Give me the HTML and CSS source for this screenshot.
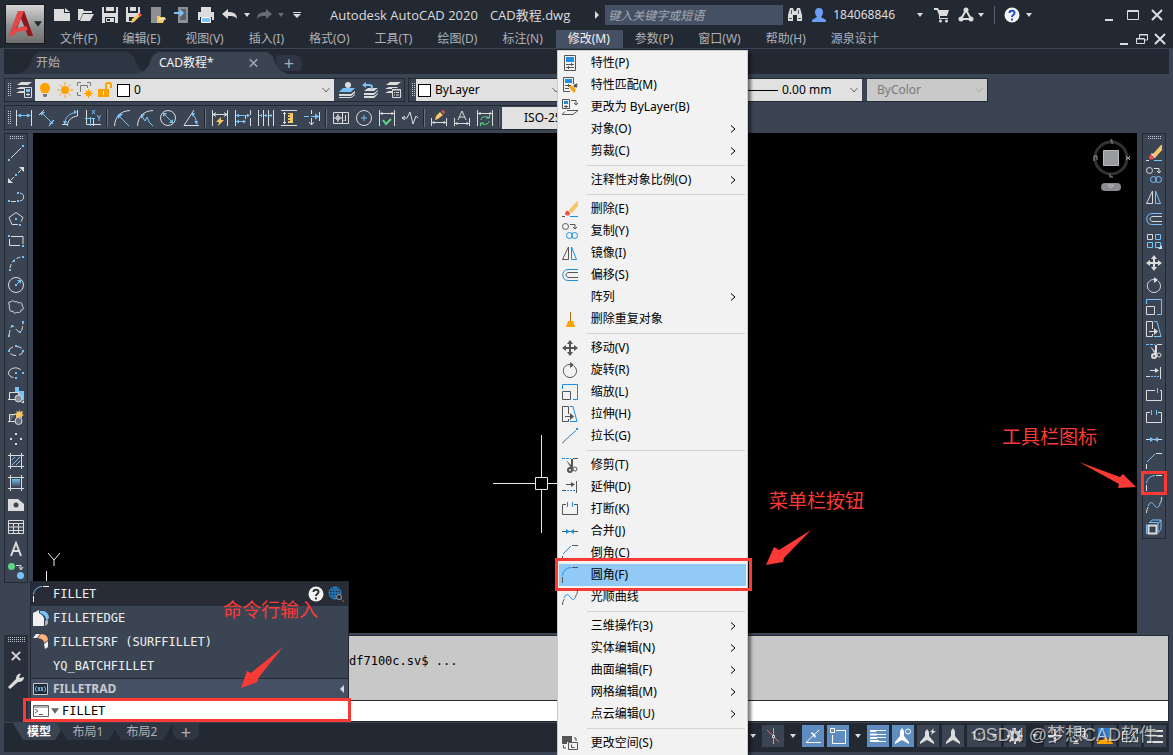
FILE: index.html
```html
<!DOCTYPE html>
<html lang="zh-CN">
<head>
  <meta charset="UTF-8" />
  <meta name="viewport" content="width=device-width, initial-scale=1.0"/>
  <title>Autodesk AutoCAD 2020 - CAD教程.dwg</title>
  <link rel="stylesheet" href="styles.css">
</head>
<body>

  <!-- Icon set -->
  <svg class="sprite" aria-hidden="true">
    <defs>
      <linearGradient id="grad" x1="0" y1="0" x2="0" y2="1"><stop offset="0" stop-color="#6fbdf5"/><stop offset="1" stop-color="#3b4453"/></linearGradient>
    </defs>
    <symbol id="caret" viewBox="0 0 6 6"><path class="f" d="M0 1h6L3 5z"/></symbol>
    <symbol id="chev" viewBox="0 0 8 8"><path d="M0.500 2l3.500 4 3.500-4"/></symbol>
    <symbol id="sub" viewBox="0 0 8 8"><path d="M2 0.500l4 3.500-4 3.500"/></symbol>
    <symbol id="x" viewBox="0 0 12 12"><path d="M1 1l10 10M11 1L1 11"/></symbol>

    <!-- quick access -->
    <symbol id="new" viewBox="0 0 16 16"><path class="f" d="M0 2h10v4h6v8H0z"/><path class="f" d="M11 1l5 4h-5z"/></symbol>
    <symbol id="open" viewBox="0 0 16 16"><path class="f" d="M0 2h5l1 2h8v2H5l-3 7H0z"/><path class="f" d="M5 7h11l-4 7H2z"/></symbol>
    <symbol id="save" viewBox="0 0 16 16"><path class="f" d="M0 0h2v6h12V0h2v16H0z"/><path class="f" d="M4 0h8v4H4z"/><path class="dk" d="M3 10h10v6H3z"/><path class="f" d="M4 11h8v4H4z"/><path class="dk" d="M5 12h3v2H5z"/></symbol>
    <symbol id="saveas" viewBox="0 0 16 16"><path class="f" d="M0 0h2v6h10V0h2v7l-7 8H0z"/><path class="f" d="M4 0h6v4H4z"/><path class="dk" d="M3 10h6v4H3z"/><path class="y" d="M6 12l6-5 2 2-6 6-3 1z"/><path class="r" d="M12 7l2-1 2 2-2 2z"/></symbol>
    <symbol id="webopen" viewBox="0 0 16 16"><path class="f g" d="M1 0h10v9H7v7H1z"/><path class="y" d="M7 9h3l1 1h4v1l-2 5H7z"/><path stroke="#fff" d="M9 12h7"/></symbol>
    <symbol id="websave" viewBox="0 0 16 16"><path class="f g" d="M4 0h10v16H4z"/><path fill="#5c6068" stroke="none" d="M6 2h6v11H6z"/><path class="af" d="M0 5h6V2l4 4-4 4V7H0z"/></symbol>
    <symbol id="print" viewBox="0 0 16 16"><path class="f" d="M3 0h10v5H3z"/><path class="f" d="M0 5h16v8h-2v-3H2v3H0z"/><path class="af" d="M4 11h8v4H4z"/><path d="M3.500 10.500h9v5h-9z" stroke="#fff"/></symbol>
    <symbol id="undo" viewBox="0 0 16 16"><path class="f" d="M0 7l6-5v3c5 0 9 1 9 7-2-3-4-3-9-3v3z"/></symbol>
    <symbol id="redo" viewBox="0 0 16 16"><path class="f" d="M16 7l-6-5v3C5 5 1 6 1 12c2-3 4-3 9-3v3z"/></symbol>
    <symbol id="custom" viewBox="0 0 8 8"><path class="f" d="M0 1h8v1H0zM0 3h8L4 7z"/></symbol>
    <symbol id="binoc" viewBox="0 0 16 16"><path class="f" d="M3 1h3l1 3h2l1-3h3l2 7v6h-5V8H6v6H1V8z"/><path stroke="#555b66" d="M4.500 3v4M11.500 3v4M2 11.500h3M11 11.500h3"/></symbol>
    <symbol id="user" viewBox="0 0 16 16"><path fill="#6b9ef5" stroke="none" d="M8 1c3 0 4 2 4 4s-1 4-2 5l5 3v2H1v-2l5-3C5 9 4 7 4 5s1-4 4-4z"/></symbol>
    <symbol id="cart" viewBox="0 0 16 16"><path class="f" d="M0 1h4l1 2h10l-2 6H6v2h8v1H5V8L3 3H0z"/><circle class="f" cx="6.500" cy="14" r="1.500"/><circle class="f" cx="12.500" cy="14" r="1.500"/></symbol>
    <symbol id="a360" viewBox="0 0 16 16"><path stroke-width="2" d="M8 3l-5 9h10z"/><circle class="f" cx="8" cy="3" r="2.500"/><circle class="f" cx="3" cy="12" r="2.500"/><circle class="f" cx="13" cy="12" r="2.500"/></symbol>
    <symbol id="help" viewBox="0 0 16 16"><circle cx="8" cy="8" r="7.500" fill="#f3f3f3" stroke="none"/><path class="q" stroke-width="2" d="M5.500 6c0-3 5-3 5 0 0 2-2.500 2-2.500 4M8 11.500v2"/></symbol>
    <symbol id="min" viewBox="0 0 12 12"><path stroke-width="2" d="M2 11h8"/></symbol>
    <symbol id="max" viewBox="0 0 12 12"><path d="M0.500 1.500h11v9h-11zM0 2.500h12"/></symbol>
    <symbol id="restore" viewBox="0 0 12 12"><path d="M0.500 5.500h8v5h-8zM0 6h8M3.500 5V1.500h8V7H9M3 2h9"/></symbol>

    <!-- layers -->
    <symbol id="layers" viewBox="0 0 16 16"><path class="f" d="M5 0h11l-4 3H1zM4 5h9l-2 2H0zM4 9h4v2H0z"/><path class="dk2" d="M8 6h8v10H8z"/><path d="M8.500 5.500h7v10h-7z"/><path class="af" d="M10 7h4v3h-4z"/><path d="M10 12.500h4M12 11v3"/></symbol>
    <symbol id="bulb" viewBox="0 0 16 16"><path class="o" d="M8 1c3 0 5 2 5 5 0 2-1 3-2 5H5C4 9 3 8 3 6c0-3 2-5 5-5z"/><path fill="#777" stroke="none" d="M6 12h4v2l-1 1H7l-1-1z"/></symbol>
    <symbol id="sun" viewBox="0 0 16 16"><circle class="o" cx="8" cy="8" r="4"/><path stroke="#ffa200" d="M8 0v3M8 13v3M0 8h3M13 8h3M2.500 2.500l2 2M11.500 11.500l2 2M2.500 13.500l2-2M11.500 4.500l2-2"/></symbol>
    <symbol id="vpsun" viewBox="0 0 16 16"><path stroke="#777" d="M0.500 4V0.500H4M10 0.500h3.500V4M0.500 10v3.500H4M3.500 10V3.500h7V6"/><circle class="o" cx="11.500" cy="11.500" r="2.500"/><path stroke="#ffa200" d="M11.500 7v9M7 11.500h9M8.500 8.500l6 6M8.500 14.500l6-6"/></symbol>
    <symbol id="lock" viewBox="0 0 16 16"><path class="o" d="M1 7h11v8H1z"/><path stroke="#ffa200" stroke-width="2" d="M9 7V3c0-3 5-3 5 0v3"/><path stroke="#fff" d="M6.500 9v4"/></symbol>
    <symbol id="laycur" viewBox="0 0 16 16"><path class="af" d="M4 6h12l-4 4H0z"/><path class="f" d="M0 12h12l4-3v2l-4 3H0z"/><path d="M0 15.500h12l4-3"/><circle class="f" cx="9" cy="3" r="3"/></symbol>
    <symbol id="layprev" viewBox="0 0 16 16"><path class="f" d="M6 6h10l-4 3H2zM2 11h10l4-3v1l-4 4H2zM2 14h10l4-3v1l-4 4H2z"/><path class="a" stroke-width="2" d="M2 3h5c3 0 3 1 3 4"/><path class="af" d="M0 3l4-3v6z"/></symbol>
    <symbol id="layst" viewBox="0 0 16 16"><path class="f" d="M5 0h11l-4 3H1zM4 5h9l-2 2H0zM4 9h4v2H0z"/><path class="dk2" d="M7 6h9v10H7z"/><path d="M7.500 7.500h8v8h-8zM7 8h9M9 10.500h1M11 10.500h3M9 13h1M11 13h3"/></symbol>

    <!-- dimension -->
    <symbol id="d-lin" viewBox="0 0 16 16"><path d="M0.500 0v16M15.500 0v16"/><path class="a" d="M2 5.500h12"/><path class="af" d="M1 5.500l4-2v4zM15 5.500l-4-2v4z"/></symbol>
    <symbol id="d-ali" viewBox="0 0 16 16"><path d="M0 5l5-5M10 16l5-6"/><path class="a" d="M3 3l10 10"/><path class="af" d="M2 2h4L2 6zM14 14h-4l4-4z"/></symbol>
    <symbol id="d-arc" viewBox="0 0 16 16"><path d="M5.500 16c0-6 4-9 10-10M0 14.500h5M15.500 0v6"/><path class="a" d="M2.500 14C3 7 8 3 14 2.500"/><path class="af" d="M1 11h4l-2 4zM12 0v4l3-2z"/></symbol>
    <symbol id="d-ord" viewBox="0 0 16 16"><path d="M1.500 0v14.500H16M8.500 8v8"/><path class="a" d="M0 8.500h10M7 0l3 4M10 0L7 4M12 5l2 3 2-3M14 8v3M5.500 7v9"/></symbol>
    <symbol id="d-rad" viewBox="0 0 16 16"><path d="M0.500 16C1 7 6 1 16 0.500"/><path class="a" d="M5 6l10 10"/><path class="af" d="M4 4h5L4 9z"/></symbol>
    <symbol id="d-jog" viewBox="0 0 16 16"><path d="M0.500 16C1 7 6 1 16 0.500"/><path class="a" d="M5 6l3 5 2-4 2 5 4 4"/><path class="af" d="M4 4h4L4 9z"/></symbol>
    <symbol id="d-dia" viewBox="0 0 16 16"><circle cx="8" cy="8" r="7.500"/><path class="a" d="M3 3l10 10"/><path class="af" d="M3 3h4L3 7zM13 13H9l4-4z"/></symbol>
    <symbol id="d-ang" viewBox="0 0 16 16"><path d="M11 0L1 15.500h15"/><path class="a" d="M9 4c3 2 4 5 4.500 9"/><path class="af" d="M8 3h4l-2 4zM11 11h4l-1 4z"/></symbol>
    <symbol id="d-quick" viewBox="0 0 16 16"><path d="M0.500 0v16M15.500 0v16M1 4.500h14M1 4.500l3-2M1 4.500l3 2M15 4.500l-3-2M15 4.500l-3 2"/><path class="y" d="M9 7l-5 5h3l-1 4 6-6H9z"/></symbol>
    <symbol id="d-base" viewBox="0 0 16 16"><path d="M0.500 0v16M10.500 6v3M15.500 0v5M15.500 8v8"/><path class="a" d="M1 5.500h13M1 11.500h9"/><path class="af" d="M15 5.500l-3-2v4zM11 11.500l-3-2v4zM1 5.500l3-2v4zM1 11.500l3-2v4z"/></symbol>
    <symbol id="d-cont" viewBox="0 0 16 16"><path d="M0.500 0v16M5.500 0v16M10.500 0v16M15.500 0v16"/><path class="a" stroke-dasharray="3 2" d="M1 5.500h14M3.500 4v3M8 4v3M13 4v3"/></symbol>
    <symbol id="d-space" viewBox="0 0 16 16"><path d="M0 0.500h16M0 15.500h16M3.500 2v12M2 3.500h3M2 12.500h3"/><path class="y" d="M7 3h5v10H7v-2h2v-1H7V8h2V7H7V5h2V4H7z"/></symbol>
    <symbol id="d-break" viewBox="0 0 16 16"><path d="M7.500 0v4M7.500 8v7M5 12l2.500 3 2.500-3M15.500 2v9"/><path class="a" d="M0 6.500h5M7 6.500h8"/><path class="af" d="M15 6.500l-4-3v6z"/></symbol>
    <symbol id="d-tol" viewBox="0 0 16 16"><path d="M0.500 2.500h15v11h-15zM9.500 2v12M5 4v8M1 8h8M12.500 5v6M10.500 10.500h1"/><circle cx="5" cy="8" r="2"/></symbol>
    <symbol id="d-cen" viewBox="0 0 16 16"><circle cx="8" cy="8" r="7.500"/><path class="a" d="M8 5v6M5 8h6"/></symbol>
    <symbol id="d-ins" viewBox="0 0 16 16"><path d="M0.500 0v16M15.500 0v16M1 3.500h14M3 2v3M13 2v3"/><path class="gr" d="M4 10l3 4 5-5"/></symbol>
    <symbol id="d-jl" viewBox="0 0 16 16"><path d="M0 8h5l3-6 3 12 3-8 2 2M3 6L0 8l3 2"/></symbol>
    <symbol id="d-edit" viewBox="0 0 16 16"><path d="M0.500 8v8M15.500 8v8M1 12.500h14M3 11v3M13 11v3"/><path class="y" d="M5 6l4-4 3 3-5 4-3 1z"/><path class="r" d="M10 1l2-1 2 2-1 2z"/></symbol>
    <symbol id="d-text" viewBox="0 0 16 16"><path d="M0.500 8v8M15.500 8v8M1 13.500h14M3 12v3M13 12v3M4 10l4-9 4 9M5 7h6"/></symbol>
    <symbol id="d-upd" viewBox="0 0 16 16"><path d="M0.500 0v16M15.500 0v16M1 3.500h14M3 2v3M13 2v3"/><path stroke="#5bd884" d="M4 10c0-4 6-4 8-2M12 11c0 4-6 4-8 2M12.500 5v3H9M3.500 16v-3H7"/></symbol>

    <!-- draw -->
    <symbol id="line" viewBox="0 0 16 16"><path d="M3 13L13 3"/><path class="af" d="M0 14h2v2H0zM14 0h2v2h-2z"/></symbol>
    <symbol id="xline" viewBox="0 0 16 16"><path d="M3 13l3-3M10 6l3-3"/><path class="f" d="M0 16v-5l5 5zM16 0v5l-5-5z"/><path class="af" d="M7 7h2v2H7z"/></symbol>
    <symbol id="pline" viewBox="0 0 16 16"><path d="M3 12.500h5M12 4c5 1 5 7 0 8"/><path class="af" d="M0 11h2v2H0zM9 3h2v2H9zM9 11h2v2H9z"/></symbol>
    <symbol id="polygon" viewBox="0 0 16 16"><path d="M8 1.500l7 5-2 4M10 13.500H4l-3-7 7-5"/><path class="af" d="M7 7h2v2H7zM11 13h2v2h-2z"/></symbol>
    <symbol id="rect" viewBox="0 0 16 16"><path d="M3 3.500h12V11M12 12.500H1.500V6"/><path class="af" d="M0 2h2v2H0zM14 12h2v2h-2z"/></symbol>
    <symbol id="arc" viewBox="0 0 16 16"><path stroke-dasharray="4 2" d="M2 13C3 7 7 3 13 2"/><path class="af" d="M1 14h2v2H1zM5 5h2v2H5zM14 1h2v2h-2z"/></symbol>
    <symbol id="circle" viewBox="0 0 16 16"><circle cx="8" cy="8" r="7.500"/><path class="a" d="M9 7l3-3"/><path class="af" d="M7 7h2v2H7zM9 3h4v4z"/></symbol>
    <symbol id="cloud" viewBox="0 0 16 16"><path d="M2 7C0 5 0 2 3 3c1-2 3-1 4 0 2-1 3 0 3 1 2-1 5 0 4 3 2 1 2 4-1 4 0 3-3 3-4 2-2 2-4 1-4-1-3 1-4-1-3-3-1 0-2-1 0-2z"/></symbol>
    <symbol id="spline" viewBox="0 0 16 16"><path stroke-dasharray="5 2" d="M1 14c1-6 3-12 6-7 4 5 7 7 8-5"/><path class="af" d="M0 14h2v2H0zM3 4h2v2H3zM11 10h2v2h-2zM14 0h2v2h-2z"/></symbol>
    <symbol id="ellipse" viewBox="0 0 16 16"><ellipse cx="8" cy="8" rx="7" ry="4.500" stroke-dasharray="6 3"/><path class="af" d="M0 7h2v2H0zM14 7h2v2h-2zM7 2h2v2H7z"/></symbol>
    <symbol id="ellarc" viewBox="0 0 16 16"><path d="M13 5C9 1 1 3 0.500 8c0 2 2 4 5 4.500"/><path class="af" d="M7 7h2v2H7zM14 7h2v2h-2zM7 12h2v2H7z"/></symbol>
    <symbol id="insert" viewBox="0 0 16 16"><path class="af" d="M7 0h4v4h5v9H7z"/><path class="dk2" d="M1 6h9v7H1z"/><path d="M0 12.500h8M1.500 13V5.500h9V8"/><circle cx="10.500" cy="11.500" r="3.500" fill="#888d96"/><path class="f" d="M13 16h3v-3z"/></symbol>
    <symbol id="block" viewBox="0 0 16 16"><path d="M0 12.500h8M1.500 13V5.500h6" fill="#666d78"/><circle cx="10.500" cy="12" r="3.500" fill="#666d78"/><path class="y" d="M11 0l1 3 3-1-1 3 2 1-2 1 0 2-3-1-3 1 0-3-2-1 3-1-1-2 3 1z"/></symbol>
    <symbol id="point" viewBox="0 0 16 16"><path class="f" d="M7 2h2v2H7zM2 7h2v2H2zM12 7h2v2h-2zM7 12h2v2H7z"/></symbol>
    <symbol id="hatch" viewBox="0 0 16 16"><path d="M0 2.500h16M0 13.500h16M2.500 0v16M13.500 0v16"/><path class="a" d="M4 7l3-3M4 12l8-8M8 12l4-4"/></symbol>
    <symbol id="gradient" viewBox="0 0 16 16"><path d="M0 2.500h16M0 13.500h16M2.500 0v16M13.500 0v16"/><path fill="url(#grad)" stroke="none" d="M4 4h8v8H4z"/></symbol>
    <symbol id="region" viewBox="0 0 16 16"><path class="f" d="M0 2h10l6 5v7H0z"/><circle class="dk2" cx="8" cy="8" r="2.500"/></symbol>
    <symbol id="table" viewBox="0 0 16 16"><path d="M0.500 1.500h15v13h-15zM0 4.500h16M0 8h16M0 11.500h16M5.500 5v9M10.500 5v9"/></symbol>
    <symbol id="mtext" viewBox="0 0 16 16"><path stroke-width="2" d="M3 15L8 2l5 13M4 10h8"/></symbol>
    <symbol id="addsel" viewBox="0 0 16 16"><circle cx="3.500" cy="3.500" r="3.500" fill="#5bd884" stroke="none"/><circle class="af" cx="12.500" cy="12.500" r="3.500"/><path d="M8 2.500h5V6M11 4l2 3 2-3"/></symbol>

    <!-- modify -->
    <symbol id="erase" viewBox="0 0 16 16"><path class="y" d="M6 10l9-10h1v5l-7 8z"/><path fill="#fff" stroke="none" d="M5 9l3 4 1-1-3-4z"/><path class="r" d="M4 10c2-1 4 1 4 3-1 2-4 2-5 0z"/><path d="M0 15.500h3"/><path class="a" d="M8 15.500h8"/></symbol>
    <symbol id="copy" viewBox="0 0 16 16"><circle cx="3.500" cy="3.500" r="3"/><path d="M8 1.500h5V6M11 4l2 2 2-2"/><circle class="a" cx="7.500" cy="12.500" r="3"/><circle class="a" cx="12.500" cy="12.500" r="3"/></symbol>
    <symbol id="mirror" viewBox="0 0 16 16"><path d="M6.500 2v12.500H0.500z"/><path class="a" d="M9.500 2v12.500h5z"/></symbol>
    <symbol id="offset" viewBox="0 0 16 16"><path class="a" d="M16 2.500H6c-7 0-7 11 0 11h10"/><path d="M16 5.500H7c-4 0-4 5 0 5h9"/></symbol>
    <symbol id="array" viewBox="0 0 16 16"><path d="M1.500 1.500h5v5h-5z"/><path class="a" d="M9.500 1.500h5v5h-5zM1.500 9.500h5v5h-5zM9.500 9.500h5v5h-5z"/><path class="f" d="M16 12v4h-4z"/></symbol>
    <symbol id="dedup" viewBox="0 0 16 16"><path stroke="#a86b1e" d="M8.500 1v9"/><path class="o" d="M6 10h5l2 6H4z"/></symbol>
    <symbol id="move" viewBox="0 0 16 16"><path stroke-width="2" d="M8 2v12M2 8h12"/><path class="f" d="M8 0l3 4H5zM8 16l3-4H5zM0 8l4-3v6zM16 8l-4-3v6z"/></symbol>
    <symbol id="rotate" viewBox="0 0 16 16"><path d="M12 4c5 4 2 11.500-4 11.500S-1 8 3.500 4c1-1 3-1.500 5-1.500"/><path class="f" d="M8 0l4 3-4 3z"/></symbol>
    <symbol id="scale" viewBox="0 0 16 16"><path class="a" d="M0.500 5V0.500h15v15H11"/><path d="M0.500 7.500h8v8h-8z"/></symbol>
    <symbol id="stretch" viewBox="0 0 16 16"><path d="M6.500 8V0.500h-6v15h6V13M3 10.500h6"/><path class="f" d="M8 7l4 3.500L8 14z"/><path class="a" d="M8 0.500h3l4 15H8"/></symbol>
    <symbol id="lengthen" viewBox="0 0 16 16"><path d="M0 15.500l6-6"/><path class="a" d="M6 9.500l8-7"/><path class="af" d="M14 0h2v2h-2z"/></symbol>
    <symbol id="trim" viewBox="0 0 16 16"><path class="a" stroke-dasharray="3 1" d="M0 1.500h9"/><path d="M11 1.500h5"/><path class="f" d="M4 3l5 8 2-1zM9 2v9h2V2z"/><circle cx="8" cy="13" r="2" stroke-width="2"/><circle cx="13" cy="12" r="2"/></symbol>
    <symbol id="extend" viewBox="0 0 16 16"><path d="M14.500 2v12M4 5.500h6M0 11.500h4"/><path class="f" d="M9 3l4 2.500L9 8z"/><path class="a" stroke-dasharray="2 1" d="M5 11.500h9"/></symbol>
    <symbol id="breakpt" viewBox="0 0 16 16"><path d="M9 3.500H0.500v10h15v-10H14"/><path class="a" d="M11.500 1v5"/></symbol>
    <symbol id="break" viewBox="0 0 16 16"><path d="M4 3.500H0.500v10h15v-10H12"/><path class="a" d="M5.500 1v5M10.500 1v5"/></symbol>
    <symbol id="join" viewBox="0 0 16 16"><path d="M0 8.500h16"/><path class="af" d="M4 6l4 2.500L4 11zM12 6L8 8.500l4 2.500z"/></symbol>
    <symbol id="chamfer" viewBox="0 0 16 16"><path d="M0.500 16v-5M10 0.500h6"/><path class="a" d="M1 9l8-8"/></symbol>
    <symbol id="fillet" viewBox="0 0 16 16"><path d="M0.500 16v-6M10 0.500h6"/><path class="a" d="M0.500 8.500C1 4 4 1 9 0.500"/></symbol>
    <symbol id="blend" viewBox="0 0 16 16"><path d="M0.500 16c0-3 1-5 2-6M15.500 0c0 3 0 5-2 7"/><path class="a" d="M2 9C5 2 8 8 9 9c2 3 4 1 5-2"/></symbol>
    <symbol id="explode" viewBox="0 0 16 16"><path d="M2.500 6.500h8v8h-8z" stroke-width="2"/><path class="a" d="M0.500 15V5.500M3 4l3-3h9M12 5l3-4v9l-3 4M3 3.500h9v9"/></symbol>
    <symbol id="props" viewBox="0 0 16 16"><path d="M2.500 0.500h11v15h-11zM4 9.500h8M4 12.500h8M9.500 8v3M6.500 11v3"/><path class="af" d="M4 2h8v5H4z"/></symbol>
    <symbol id="match" viewBox="0 0 16 16"><path d="M8 14.500H1.500v-14h10V7M3 8.500h6M3 11.500h4M6.500 7v3"/><path class="af" d="M3 2h7v4H3z"/><path class="o" d="M7 10l2-2 5 5-2 3z"/><path d="M12 10l3-3M12 8l3 2" stroke-width="2"/></symbol>
    <symbol id="bylayer" viewBox="0 0 16 16"><path d="M0.500 0.500h7v9h-7zM2 7.500h4M4 6v3M5 11.500h11l-5 4H0l3-3M9 1.500h5V6M12 4l2 2 2-2"/><path class="af" d="M2 2h4v3H2z"/></symbol>
    <symbol id="chspace" viewBox="0 0 16 16"><path class="f" d="M0 1h10v6H5v2H0z"/><path d="M6.500 7.500h9v7h-9zM12 3h2v3M1.500 10v3H4M9.500 9.500v3h3"/></symbol>

    <!-- command line -->
    <symbol id="wrench" viewBox="0 0 16 16"><path class="f" d="M0 14l8-8c0-3 2-6 5-5l-2 3 1 1 4-1c0 4-3 5-6 5l-8 7z"/></symbol>
    <symbol id="fedge" viewBox="0 0 16 16"><path class="f" d="M0 3l6-3v2c-1 2 3 1 5 6v8H0z"/><path class="af" d="M7 1h4c3 1 5 4 5 7l-3 2c0-4-3-6-6-7z"/><path fill="#aaa" stroke="none" d="M12 11l3-2v5l-3 2z"/></symbol>
    <symbol id="fsrf" viewBox="0 0 16 16"><path class="f" d="M3 0h4L4 4H0zM11 10l4-3v6l-3 2z"/><path fill="#ffb27a" stroke="none" d="M8 0c5 0 7 3 7 6l-4 3c0-3-2-4-6-5z"/></symbol>
    <symbol id="var" viewBox="0 0 16 16"><path class="dk" d="M0 2h15v12H0z"/><path d="M0.500 2.500h14v11h-14z"/><path class="a" d="M4 5c-2 1-2 5 0 6M11 5c2 1 2 5 0 6M5 6l2 4M7 6l-2 4M8 6l2 4M10 6l-2 4"/></symbol>
    <symbol id="globe" viewBox="0 0 16 16"><circle cx="7" cy="7" r="6" stroke="#1e8fe0"/><path stroke="#1e8fe0" d="M7 1v12M1 7h12M2 4h10M2 10h10M7 1c-4 3-4 9 0 12M7 1c4 3 4 9 0 12"/><circle cx="11" cy="11" r="2.500" fill="#272c37" stroke="#999"/><path stroke="#a86b1e" d="M13 13l3 3"/></symbol>
    <symbol id="prompt" viewBox="0 0 16 16"><path d="M0.500 2.500h15v11h-15zM0 4h16M2 6l3 2-3 2M6 11.500h4"/></symbol>

    <!-- status bar -->
    <symbol id="s-iso" viewBox="0 0 16 16"><path stroke="#e06a6a" d="M2 2l12 12"/><path stroke="#5bd884" d="M8.500 0v16"/><path fill="#222933" d="M7.500 7.500h2v2h-2z"/></symbol>
    <symbol id="s-polar" viewBox="0 0 16 16"><path d="M14 2L1 14.500h15"/><path class="f" d="M6 5l4 5 1-2-4-4z"/></symbol>
    <symbol id="s-osnap" viewBox="0 0 16 16"><path d="M6 2.500h9.500v13h-13V7"/><path d="M0.500 0.500h4v4h-4z"/></symbol>
    <symbol id="s-lw" viewBox="0 0 16 16"><path d="M0 2.500h16M6 6.500h10M7 9.500h9M0 13.500h16"/><path stroke-width="2" d="M0 3h6M0 6.500h7M0 10h7M0 13h9"/></symbol>
    <symbol id="s-man" viewBox="0 0 16 16"><path class="f" d="M8 0l2 3v5l5 6v2l-7-4-7 4v-2l5-6V3z"/></symbol>
    <symbol id="s-vis" viewBox="0 0 16 16"><path class="f" d="M7 0l2 3v5l5 6v2l-7-4-7 4v-2l5-6V3z"/><circle cx="13" cy="3.500" r="2.500"/></symbol>
    <symbol id="s-auto" viewBox="0 0 16 16"><path class="f" d="M7 1l2 3v4l5 6v2l-7-4-7 4v-2l5-6V4zM14 0l-4 4h2l-1 3 5-4h-3z"/></symbol>
    <symbol id="s-gear" viewBox="0 0 16 16"><circle cx="8" cy="8" r="4" stroke-width="3"/><path stroke-width="2" d="M8 0v3M8 13v3M0 8h3M13 8h3M2.500 2.500l2 2M11.500 11.500l2 2M2.500 13.500l2-2M11.500 4.500l2-2"/></symbol>
    <symbol id="s-plus" viewBox="0 0 16 16"><path stroke-width="2" d="M8 1v14M1 8h14"/></symbol>
    <symbol id="s-iso2" viewBox="0 0 16 16"><path d="M4.500 0.500h8v8h-8zM5 3.500h7M8.500 1v7"/><path class="f" d="M4 11l3 5H1z"/><circle cx="13" cy="8" r="2.500"/></symbol>
    <symbol id="s-hw" viewBox="0 0 16 16"><path fill="#2f7fd0" stroke="none" d="M1 0h11v10H1z"/><path class="o" d="M0 12h6l2-3 3 3 2-3 3 7H0z"/></symbol>
    <symbol id="s-full" viewBox="0 0 16 16"><path d="M6 3.500H0.500v10h15V9M10 1.500h5.500V6M15 2L9 8"/></symbol>
    <symbol id="s-menu" viewBox="0 0 16 16"><path stroke-width="2" d="M0 3h16M0 8h16M0 14h16"/></symbol>
  </svg>

  <header class="header">
    <button class="app-btn" aria-label="应用程序菜单">
      <svg width="24" height="28" viewBox="0 0 24 28">
        <path fill="#c42a2c" d="M9 1h6l9 25h-5L12 8 6 24l-6 2z"/>
        <path fill="#8c1a1c" d="M12 8l3-7 9 25h-5z"/>
        <path fill="#e4494a" d="M9 1h6l-4 10-5 8 11-3 2 4-11 2-5 4H0z"/>
        <path fill="#a9a9a9" d="M12 10l3 6-6 1z"/>
      </svg>
      <svg class="caret"><use href="#caret"/></svg>
    </button>
    <div class="header-rows">
      <div class="title-row">
        <div class="quick">
          <button class="qa" aria-label="新建"><svg class="ic"><use href="#new"/></svg></button>
          <button class="qa" aria-label="打开"><svg class="ic"><use href="#open"/></svg></button>
          <button class="qa" aria-label="保存"><svg class="ic"><use href="#save"/></svg></button>
          <button class="qa" aria-label="另存为"><svg class="ic"><use href="#saveas"/></svg></button>
          <button class="qa" aria-label="从 Web 打开"><svg class="ic"><use href="#webopen"/></svg></button>
          <button class="qa" aria-label="保存到 Web"><svg class="ic"><use href="#websave"/></svg></button>
          <button class="qa" aria-label="打印"><svg class="ic"><use href="#print"/></svg></button>
          <button class="qa" aria-label="放弃"><svg class="ic"><use href="#undo"/></svg></button>
          <button class="drop" aria-label="放弃列表"><svg class="caret"><use href="#caret"/></svg></button>
          <button class="qa dim" aria-label="重做"><svg class="ic"><use href="#redo"/></svg></button>
          <button class="drop dim" aria-label="重做列表"><svg class="caret"><use href="#caret"/></svg></button>
          <button class="drop wide" aria-label="自定义"><svg class="custom"><use href="#custom"/></svg></button>
        </div>
        <div class="doc-title"><span>Autodesk AutoCAD 2020</span><span>CAD教程.dwg</span></div>
        <div class="info">
          <span class="expand"></span>
          <input class="search" type="text" placeholder="键入关键字或短语" aria-label="搜索">
          <button class="qa" aria-label="搜索"><svg class="ic"><use href="#binoc"/></svg></button>
          <button class="account"><svg class="ic"><use href="#user"/></svg>184068846<svg class="caret"><use href="#caret"/></svg></button>
          <button class="qa" aria-label="购物车"><svg class="ic"><use href="#cart"/></svg></button>
          <button class="qa" aria-label="A360"><svg class="ic"><use href="#a360"/></svg></button>
          <svg class="caret"><use href="#caret"/></svg>
          <span class="bar"></span>
          <button class="qa" aria-label="帮助"><svg class="ic help"><use href="#help"/></svg></button>
          <svg class="caret"><use href="#caret"/></svg>
        </div>
        <div class="win">
          <button aria-label="最小化"><svg><use href="#min"/></svg></button>
          <button aria-label="最大化"><svg><use href="#max"/></svg></button>
          <button aria-label="关闭"><svg class="bold"><use href="#x"/></svg></button>
        </div>
      </div>
      <nav class="menu-row">
        <button>文件(F)</button>
        <button>编辑(E)</button>
        <button>视图(V)</button>
        <button>插入(I)</button>
        <button>格式(O)</button>
        <button>工具(T)</button>
        <button>绘图(D)</button>
        <button>标注(N)</button>
        <div class="menu-holder">
          <button class="on">修改(M)</button>
          <!-- Modify menu -->
          <div class="menu">
            <button><svg class="ic"><use href="#props"/></svg>特性(P)</button>
            <button><svg class="ic"><use href="#match"/></svg>特性匹配(M)</button>
            <button><svg class="ic"><use href="#bylayer"/></svg>更改为 ByLayer(B)</button>
            <button><i></i>对象(O)<svg class="sub"><use href="#sub"/></svg></button>
            <button><i></i>剪裁(C)<svg class="sub"><use href="#sub"/></svg></button>
            <hr>
            <button><i></i>注释性对象比例(O)<svg class="sub"><use href="#sub"/></svg></button>
            <hr>
            <button><svg class="ic"><use href="#erase"/></svg>删除(E)</button>
            <button><svg class="ic"><use href="#copy"/></svg>复制(Y)</button>
            <button><svg class="ic"><use href="#mirror"/></svg>镜像(I)</button>
            <button><svg class="ic"><use href="#offset"/></svg>偏移(S)</button>
            <button><i></i>阵列<svg class="sub"><use href="#sub"/></svg></button>
            <button><svg class="ic"><use href="#dedup"/></svg>删除重复对象</button>
            <hr>
            <button><svg class="ic"><use href="#move"/></svg>移动(V)</button>
            <button><svg class="ic"><use href="#rotate"/></svg>旋转(R)</button>
            <button><svg class="ic"><use href="#scale"/></svg>缩放(L)</button>
            <button><svg class="ic"><use href="#stretch"/></svg>拉伸(H)</button>
            <button><svg class="ic"><use href="#lengthen"/></svg>拉长(G)</button>
            <hr>
            <button><svg class="ic"><use href="#trim"/></svg>修剪(T)</button>
            <button><svg class="ic"><use href="#extend"/></svg>延伸(D)</button>
            <button><svg class="ic"><use href="#break"/></svg>打断(K)</button>
            <button><svg class="ic"><use href="#join"/></svg>合并(J)</button>
            <button><svg class="ic"><use href="#chamfer"/></svg>倒角(C)</button>
            <button class="current"><svg class="ic"><use href="#fillet"/></svg>圆角(F)<span class="mark"></span></button>
            <button><svg class="ic"><use href="#blend"/></svg>光顺曲线</button>
            <hr>
            <button><i></i>三维操作(3)<svg class="sub"><use href="#sub"/></svg></button>
            <button><i></i>实体编辑(N)<svg class="sub"><use href="#sub"/></svg></button>
            <button><i></i>曲面编辑(F)<svg class="sub"><use href="#sub"/></svg></button>
            <button><i></i>网格编辑(M)<svg class="sub"><use href="#sub"/></svg></button>
            <button><i></i>点云编辑(U)<svg class="sub"><use href="#sub"/></svg></button>
            <hr>
            <button><svg class="ic"><use href="#chspace"/></svg>更改空间(S)</button>
          </div>
        </div>
        <button>参数(P)</button>
        <button>窗口(W)</button>
        <button>帮助(H)</button>
        <button>源泉设计</button>
        <div class="win small">
          <button aria-label="最小化图形"><svg><use href="#min"/></svg></button>
          <button aria-label="还原图形"><svg><use href="#restore"/></svg></button>
          <button aria-label="关闭图形"><svg class="bold"><use href="#x"/></svg></button>
        </div>
      </nav>
    </div>
  </header>

  <div class="file-tabs">
    <button class="tab">开始</button>
    <button class="tab active">CAD教程*<svg class="bold"><use href="#x"/></svg></button>
    <button class="tab-add" aria-label="新图形">+</button>
  </div>

  <div class="tool-row">
    <div class="bar-box">
      <span class="grip"></span>
      <button class="tool" aria-label="图层特性"><svg class="ic"><use href="#layers"/></svg></button>
      <label class="combo layer">
        <svg class="ic"><use href="#bulb"/></svg>
        <svg class="ic"><use href="#sun"/></svg>
        <svg class="ic"><use href="#vpsun"/></svg>
        <svg class="ic"><use href="#lock"/></svg>
        <span class="swatch"></span>
        <select aria-label="图层"><option>0</option></select>
        <svg class="chev"><use href="#chev"/></svg>
      </label>
      <button class="tool" aria-label="置为当前"><svg class="ic"><use href="#laycur"/></svg></button>
      <button class="tool" aria-label="上一个图层"><svg class="ic"><use href="#layprev"/></svg></button>
      <button class="tool" aria-label="图层状态"><svg class="ic"><use href="#layst"/></svg></button>
    </div>
    <div class="bar-box">
      <span class="grip"></span>
      <label class="combo">
        <span class="swatch"></span>
        <select aria-label="颜色"><option>ByLayer</option></select>
        <svg class="chev"><use href="#chev"/></svg>
      </label>
      <label class="combo">
        <span class="rule"></span>
        <select aria-label="线型"><option>ByLayer</option></select>
        <svg class="chev"><use href="#chev"/></svg>
      </label>
      <label class="combo">
        <span class="rule"></span>
        <select aria-label="线宽"><option>0.00 mm</option></select>
        <svg class="chev"><use href="#chev"/></svg>
      </label>
      <label class="combo off">
        <select aria-label="打印样式" disabled><option>ByColor</option></select>
        <svg class="chev"><use href="#chev"/></svg>
      </label>
    </div>
  </div>

  <div class="tool-row dims">
    <div class="bar-box">
      <span class="grip"></span>
      <button class="tool" aria-label="线性"><svg class="ic"><use href="#d-lin"/></svg></button>
      <button class="tool" aria-label="对齐"><svg class="ic"><use href="#d-ali"/></svg></button>
      <button class="tool" aria-label="弧长"><svg class="ic"><use href="#d-arc"/></svg></button>
      <button class="tool" aria-label="坐标"><svg class="ic"><use href="#d-ord"/></svg></button>
      <span class="vsep"></span>
      <button class="tool" aria-label="半径"><svg class="ic"><use href="#d-rad"/></svg></button>
      <button class="tool" aria-label="折弯"><svg class="ic"><use href="#d-jog"/></svg></button>
      <button class="tool" aria-label="直径"><svg class="ic"><use href="#d-dia"/></svg></button>
      <button class="tool" aria-label="角度"><svg class="ic"><use href="#d-ang"/></svg></button>
      <span class="vsep"></span>
      <button class="tool" aria-label="快速标注"><svg class="ic"><use href="#d-quick"/></svg></button>
      <button class="tool" aria-label="基线"><svg class="ic"><use href="#d-base"/></svg></button>
      <button class="tool" aria-label="连续"><svg class="ic"><use href="#d-cont"/></svg></button>
      <button class="tool" aria-label="等距标注"><svg class="ic"><use href="#d-space"/></svg></button>
      <button class="tool" aria-label="折断标注"><svg class="ic"><use href="#d-break"/></svg></button>
      <span class="vsep"></span>
      <button class="tool" aria-label="公差"><svg class="ic"><use href="#d-tol"/></svg></button>
      <button class="tool" aria-label="圆心标记"><svg class="ic"><use href="#d-cen"/></svg></button>
      <button class="tool" aria-label="检验"><svg class="ic"><use href="#d-ins"/></svg></button>
      <button class="tool" aria-label="折弯线性"><svg class="ic"><use href="#d-jl"/></svg></button>
      <span class="vsep"></span>
      <button class="tool" aria-label="编辑标注"><svg class="ic"><use href="#d-edit"/></svg></button>
      <button class="tool" aria-label="编辑标注文字"><svg class="ic"><use href="#d-text"/></svg></button>
      <button class="tool" aria-label="标注更新"><svg class="ic"><use href="#d-upd"/></svg></button>
      <span class="vsep"></span>
      <label class="combo style">
        <select aria-label="标注样式"><option>ISO-25</option></select>
        <svg class="chev"><use href="#chev"/></svg>
      </label>
    </div>
  </div>

  <main class="work">
    <div class="side">
      <span class="grip"></span>
      <button aria-label="直线"><svg class="ic"><use href="#line"/></svg></button>
      <button aria-label="构造线"><svg class="ic"><use href="#xline"/></svg></button>
      <button aria-label="多段线"><svg class="ic"><use href="#pline"/></svg></button>
      <button aria-label="多边形"><svg class="ic"><use href="#polygon"/></svg></button>
      <button aria-label="矩形"><svg class="ic"><use href="#rect"/></svg></button>
      <button aria-label="圆弧"><svg class="ic"><use href="#arc"/></svg></button>
      <button aria-label="圆"><svg class="ic"><use href="#circle"/></svg></button>
      <button aria-label="修订云线"><svg class="ic"><use href="#cloud"/></svg></button>
      <button aria-label="样条曲线"><svg class="ic"><use href="#spline"/></svg></button>
      <button aria-label="椭圆"><svg class="ic"><use href="#ellipse"/></svg></button>
      <button aria-label="椭圆弧"><svg class="ic"><use href="#ellarc"/></svg></button>
      <button aria-label="插入块"><svg class="ic"><use href="#insert"/></svg></button>
      <button aria-label="创建块"><svg class="ic"><use href="#block"/></svg></button>
      <button aria-label="点"><svg class="ic"><use href="#point"/></svg></button>
      <button aria-label="图案填充"><svg class="ic"><use href="#hatch"/></svg></button>
      <button aria-label="渐变色"><svg class="ic"><use href="#gradient"/></svg></button>
      <button aria-label="面域"><svg class="ic"><use href="#region"/></svg></button>
      <button aria-label="表格"><svg class="ic"><use href="#table"/></svg></button>
      <button aria-label="多行文字"><svg class="ic"><use href="#mtext"/></svg></button>
      <button aria-label="添加选定对象"><svg class="ic"><use href="#addsel"/></svg></button>
    </div>

    <div class="canvas">
      <svg class="cross" width="97" height="98" viewBox="0 0 97 98"><path d="M48.500 0v42M48.500 55v43M0 48.500h42M55 48.500h42M42.500 42.500h12v12h-12z"/></svg>
      <svg class="ucs" width="24" height="40" viewBox="0 0 24 40"><path d="M5 1l6 7 6-7M11 8v6M3.500 19v21"/></svg>
      <svg class="cube" width="40" height="54" viewBox="0 0 40 54">
        <circle cx="20" cy="20" r="16" stroke="#333" stroke-width="3"/>
        <path fill="#989a9e" stroke="#bbb" d="M12.500 12.500h15v15h-15z"/>
        <path stroke="#999" d="M19 2h2v4M3 18v5M3 18h3v4M35 18l4 4M39 18l-4 4M35 20h4M19 36v3h3"/>
        <rect x="10" y="45" width="20" height="8" rx="4" fill="#8a8c90" stroke="none"/>
        <path stroke="#bbb" d="M17 47l3 3 3-3z"/>
      </svg>
    </div>

    <div class="side">
      <span class="grip"></span>
      <button aria-label="删除"><svg class="ic"><use href="#erase"/></svg></button>
      <button aria-label="复制"><svg class="ic"><use href="#copy"/></svg></button>
      <button aria-label="镜像"><svg class="ic"><use href="#mirror"/></svg></button>
      <button aria-label="偏移"><svg class="ic"><use href="#offset"/></svg></button>
      <button aria-label="阵列"><svg class="ic"><use href="#array"/></svg></button>
      <button aria-label="移动"><svg class="ic"><use href="#move"/></svg></button>
      <button aria-label="旋转"><svg class="ic"><use href="#rotate"/></svg></button>
      <button aria-label="缩放"><svg class="ic"><use href="#scale"/></svg></button>
      <button aria-label="拉伸"><svg class="ic"><use href="#stretch"/></svg></button>
      <button aria-label="修剪"><svg class="ic"><use href="#trim"/></svg></button>
      <button aria-label="延伸"><svg class="ic"><use href="#extend"/></svg></button>
      <button aria-label="打断于点"><svg class="ic"><use href="#breakpt"/></svg></button>
      <button aria-label="打断"><svg class="ic"><use href="#break"/></svg></button>
      <button aria-label="合并"><svg class="ic"><use href="#join"/></svg></button>
      <button aria-label="倒角"><svg class="ic"><use href="#chamfer"/></svg></button>
      <button aria-label="圆角"><svg class="ic"><use href="#fillet"/></svg><span class="mark"></span></button>
      <button aria-label="光顺曲线"><svg class="ic"><use href="#blend"/></svg></button>
      <button aria-label="分解"><svg class="ic"><use href="#explode"/></svg></button>
    </div>
  </main>

  <section class="command">
    <div class="cmd-side">
      <span class="grip"></span>
      <button aria-label="关闭命令行"><svg class="bold"><use href="#x"/></svg></button>
      <button aria-label="自定义命令行"><svg class="ic"><use href="#wrench"/></svg></button>
    </div>
    <div class="console">
      <div class="history">df7100c.sv$ ...</div>
      <div class="cmd-line">
        <svg class="ic"><use href="#prompt"/></svg>
        <svg class="caret"><use href="#caret"/></svg>
        <input type="text" value="FILLET" aria-label="命令行">
      </div>
      <!-- Autocomplete list -->
      <div class="suggest">
        <button class="sel"><svg class="ic"><use href="#fillet"/></svg>FILLET<span class="tips"><svg class="ic help"><use href="#help"/></svg><svg class="ic"><use href="#globe"/></svg></span></button>
        <button><svg class="ic"><use href="#fedge"/></svg>FILLETEDGE</button>
        <button><svg class="ic"><use href="#fsrf"/></svg>FILLETSRF (SURFFILLET)</button>
        <button><i></i>YQ_BATCHFILLET</button>
        <button class="cat"><svg class="ic"><use href="#var"/></svg>FILLETRAD<span class="back"></span></button>
      </div>
      <span class="mark"></span>
    </div>
  </section>

  <footer class="status">
    <div class="layouts">
      <button class="on">模型</button>
      <button>布局1</button>
      <button>布局2</button>
      <button class="add" aria-label="新建布局">+</button>
    </div>
    <div class="switches">
      <svg class="caret"><use href="#caret"/></svg>
      <button aria-label="等轴测草图"><svg class="ic"><use href="#s-iso"/></svg></button>
      <svg class="caret"><use href="#caret"/></svg>
      <button class="on" aria-label="极轴追踪"><svg class="ic"><use href="#s-polar"/></svg></button>
      <button class="on" aria-label="对象捕捉"><svg class="ic"><use href="#s-osnap"/></svg></button>
      <svg class="caret"><use href="#caret"/></svg>
      <button class="on" aria-label="线宽"><svg class="ic"><use href="#s-lw"/></svg></button>
      <button class="on" aria-label="注释可见性"><svg class="ic"><use href="#s-vis"/></svg></button>
      <button aria-label="自动缩放"><svg class="ic"><use href="#s-auto"/></svg></button>
      <button aria-label="注释比例"><svg class="ic"><use href="#s-man"/></svg></button>
      <button class="ratio">1:1<svg class="caret"><use href="#caret"/></svg></button>
      <button aria-label="切换工作空间"><svg class="ic"><use href="#s-gear"/></svg></button>
      <svg class="caret"><use href="#caret"/></svg>
      <button aria-label="注释监视器"><svg class="ic"><use href="#s-plus"/></svg></button>
      <button aria-label="隔离对象"><svg class="ic"><use href="#s-iso2"/></svg></button>
      <button aria-label="硬件加速"><svg class="ic"><use href="#s-hw"/></svg></button>
      <button aria-label="全屏显示"><svg class="ic"><use href="#s-full"/></svg></button>
      <button aria-label="自定义"><svg class="ic"><use href="#s-menu"/></svg></button>
    </div>
  </footer>

  <!-- Callouts -->
  <div class="note note-menu">菜单栏按钮<svg width="46" height="36" viewBox="0 0 46 36"><path d="M45 0L18 28l-1 4L0 35l8-18 5 3z"/></svg></div>
  <div class="note note-tool">工具栏图标<svg width="58" height="27" viewBox="0 0 58 27"><path d="M0 0l41 15 3-3 13 13-18 1 1-4z"/></svg></div>
  <div class="note note-cmd">命令行输入<svg width="42" height="41" viewBox="0 0 42 41"><path d="M42 0L18 30l-2 5-16 6 6-17 4 2z"/></svg></div>
  <div class="watermark">CSDN @梦想CAD软件</div>

</body>
</html>
```
FILE: styles.css
```css
* {
  margin: 0;
  padding: 0;
  box-sizing: border-box;
}

body {
  --accent: #78c2fa;
  --dark: #222933;
  --panel: #3b4453;
  --red: #fb3a36;
  display: flex;
  flex-direction: column;
  position: relative;
  height: 100vh;
  overflow: hidden;
  background: var(--panel);
  color: #dcdcdc;
  font-family: "Noto Sans", "Noto Sans CJK SC", sans-serif;
  font-size: 12px;
  line-height: 16px;
}

button,
input,
select {
  border: none;
  background: none;
  color: inherit;
  font: inherit;
  outline: none;
}

button {
  white-space: nowrap;
}

/* Icons */
.sprite {
  position: absolute;
  width: 0;
  height: 0;
}

svg {
  fill: none;
  stroke: currentColor;
  flex: none;
}

.ic {
  width: 16px;
  height: 16px;
}

.caret {
  width: 6px;
  height: 6px;
}

.chev,
.sub,
.custom {
  width: 8px;
  height: 8px;
}

.bold {
  stroke-width: 2;
}

.f { fill: currentColor; stroke: none; }
.g { fill: #8d8f92; }
.a { stroke: var(--accent); }
.af { fill: var(--accent); stroke: none; }
.y { fill: #f6c765; stroke: none; }
.o { fill: #ffa200; stroke: none; }
.r { fill: #f2504b; stroke: none; }
.gr { stroke: #5bd884; stroke-width: 2; }
.dk { fill: #222933; stroke: none; }
.dk2 { fill: #3b4453; stroke: none; }
.q { stroke: var(--mark, #2b50b8); }

/* Header */
.header {
  display: flex;
  height: 48px;
  flex: none;
  background: var(--dark);
}

.app-btn {
  display: flex;
  align-items: center;
  justify-content: center;
  gap: 1px;
  width: 40px;
  height: 40px;
  margin: 4px 2px 4px 5px;
  border: 1px solid #15181d;
  background: linear-gradient(#d5d5d5, #8c8c8c 60%, #6f6f6f);
  color: #222933;
}

.app-btn svg {
  stroke: none;
}

.app-btn .caret {
  width: 8px;
  height: 8px;
}

.header-rows {
  flex: 1;
  min-width: 0;
}

.title-row {
  display: flex;
  align-items: center;
  height: 30px;
}

.quick,
.info,
.account,
.win {
  display: flex;
  align-items: center;
}

.quick {
  margin-left: 3px;
}

.qa {
  display: flex;
  justify-content: center;
  width: 24px;
}

.drop {
  display: flex;
  justify-content: center;
  width: 10px;
}

.drop.wide {
  width: 22px;
}

.dim {
  color: #666c75;
}

.doc-title {
  display: flex;
  gap: 12px;
  margin-left: 22px;
  font-family: "Open Sans", "Noto Sans CJK SC", sans-serif;
  font-size: 13px;
  white-space: nowrap;
}

.info {
  margin-left: auto;
}

.expand {
  margin-right: 6px;
  border: 4px solid transparent;
  border-left-color: #dcdcdc;
  border-right: none;
}

.search {
  width: 178px;
  height: 20px;
  padding-left: 3px;
  background: #465064;
  font-style: italic;
}

.search::placeholder {
  color: #a5abb5;
}

.account {
  gap: 6px;
  margin-right: 7px;
  margin-left: 4px;
}

.account .caret {
  margin-left: 16px;
}

.bar {
  width: 1px;
  height: 18px;
  margin: 0 5px 0 10px;
  background: #596272;
}

.info > .caret:last-child {
  margin-left: 2px;
}

.win {
  gap: 12px;
  margin-left: 71px;
  margin-right: 10px;
}

.win button {
  display: flex;
}

.win svg {
  width: 12px;
  height: 12px;
}

.win.small {
  gap: 6px;
  margin-left: auto;
  margin-right: 7px;
}

.menu-row {
  display: flex;
  height: 18px;
  padding-left: 1px;
}

.menu-row > button,
.menu-holder > button {
  height: 18px;
  padding: 0 13px 0 12px;
  color: #aeb1b6;
}

.menu-holder {
  position: relative;
}

.menu-row .on {
  background: #465064;
  color: #f2f2f2;
}

/* Drop-down menu */
.menu {
  --accent: #1e8fe0;
  position: absolute;
  z-index: 5;
  top: 20px;
  left: 1px;
  width: 191px;
  padding: 1px;
  border: 1px solid #ccc;
  background: #f2f2f2;
  box-shadow: 3px 3px 3px rgba(0, 0, 0, 0.5);
  color: #000;
}

.menu > button {
  display: flex;
  align-items: center;
  position: relative;
  width: 100%;
  height: 22px;
  padding: 0 9px 0 3px;
  text-align: left;
}

.menu i,
.menu .ic {
  width: 16px;
  margin-right: 13px;
  color: #555;
}

.menu .sub {
  margin-left: auto;
}

.menu hr {
  height: 1px;
  margin: 3px 1px 3px 28px;
  border: none;
  background: #d2d2d2;
}

.menu .current {
  background: #91c9f7;
}

.mark {
  position: absolute;
  border: 3px solid var(--red);
  pointer-events: none;
}

.menu .mark {
  inset: -6px -6px -5px -4px;
}

/* File tabs */
.file-tabs {
  display: flex;
  height: 25px;
  flex: none;
  margin: 1px 4px 0;
  padding: 3px 0 0 14px;
  background: var(--dark);
}

.tab {
  display: flex;
  align-items: center;
  width: 131px;
  padding: 0 18px;
  background: #2e3643;
  clip-path: polygon(0 100%, 7px 86%, 12px 60%, 15px 20%, 21px 0, calc(100% - 21px) 0, calc(100% - 15px) 20%, calc(100% - 12px) 60%, calc(100% - 7px) 86%, 100% 100%);
  color: #aeb1b6;
}

.tab.active {
  justify-content: space-between;
  width: 151px;
  margin-left: -12px;
  padding: 0 30px 0 22px;
  background: var(--panel);
  color: #f2f2f2;
}

.tab svg {
  width: 9px;
  height: 12px;
  color: #a5abb5;
}

.tab-add {
  width: 26px;
  height: 16px;
  margin: 3px 0 0 -12px;
  border-radius: 4px 8px;
  background: #2e3643;
  color: #a5abb5;
  font-size: 18px;
}

/* Toolbars */
.tool-row {
  display: flex;
  gap: 3px;
  flex: none;
  margin: 4px 4px 0;
}

.tool-row.dims {
  margin-top: 3px;
}

.bar-box {
  display: flex;
  align-items: center;
  height: 24px;
  border: 1px solid var(--dark);
}

.dims .bar-box {
  height: 25px;
}

.grip {
  width: 4px;
  height: 14px;
  margin: 0 1px 0 2px;
  background: conic-gradient(from 90deg at 1px 1px, transparent 75%, #c3c8d0 0) 0 0 / 2px 2px;
}

.tool {
  display: flex;
  justify-content: center;
  width: 23px;
}

.vsep {
  width: 2px;
  height: 18px;
  margin: 0 2px;
  border-left: 1px solid #20252e;
  border-right: 1px solid #6a7382;
}

.combo {
  display: flex;
  align-items: center;
  gap: 4px;
  width: 148px;
  height: 22px;
  margin-right: 1px;
  padding: 0 4px 0 2px;
  background: #e1e1e1;
  color: #000;
}

.combo.layer {
  width: 299px;
}

.combo select {
  flex: 1;
  min-width: 0;
  appearance: none;
}

.combo .chev {
  color: #666;
}

.combo.off {
  width: 120px;
  margin: 0 0 0 4px;
  padding-left: 10px;
  background: #c9c9c9;
  color: #7a7a7a;
}

.combo.off select {
  opacity: 1;
}

.combo.off .chev {
  color: #aaa;
}

.combo.style {
  width: 140px;
  padding-left: 22px;
}

.swatch {
  width: 13px;
  height: 13px;
  border: 1px solid #000;
  background: #fff;
}

.rule {
  width: 62px;
  height: 1px;
  background: #000;
}

/* Work area */
.work {
  display: flex;
  align-items: flex-start;
  flex: 1;
  min-height: 0;
  gap: 5px;
  margin: 3px 7px 0 4px;
}

.side {
  display: flex;
  flex-direction: column;
  align-items: center;
  width: 24px;
  flex: none;
  border: 1px solid var(--dark);
}

.side .grip,
.cmd-side .grip {
  width: 14px;
  height: 4px;
  margin: 2px 0;
}

.side button {
  display: flex;
  align-items: center;
  position: relative;
  height: 22px;
}

.side .mark {
  inset: -1px -5px;
}

.canvas {
  align-self: stretch;
  flex: 1;
  position: relative;
  background: #000;
  color: #e8e8e8;
}

.cross,
.ucs,
.cube {
  position: absolute;
}

.cross {
  left: 460px;
  top: 302px;
}

.ucs {
  left: 10px;
  bottom: 41px;
}

.cube {
  right: 6px;
  top: 5px;
}

/* Command line */
.command {
  display: flex;
  flex: none;
  margin: 2px 4px 0;
}

.cmd-side {
  display: flex;
  flex-direction: column;
  align-items: center;
  gap: 6px;
  width: 24px;
  background: #2a303b;
}

.cmd-side .grip {
  width: 18px;
  height: 6px;
}

.cmd-side button {
  display: flex;
}

.cmd-side .bold {
  width: 10px;
  height: 10px;
  margin-bottom: 6px;
}

.console {
  flex: 1;
  position: relative;
  margin-left: 2px;
  border: 1px solid var(--dark);
  background: #fff;
  color: #000;
  font-family: "DejaVu Sans Mono", "Noto Sans CJK SC", monospace;
}

.history {
  height: 65px;
  padding: 17px 0 0 318px;
  border-bottom: 1px solid var(--dark);
  background: #c8c8c8;
}

.cmd-line {
  display: flex;
  align-items: center;
  height: 20px;
  padding-left: 2px;
  color: #666;
}

.cmd-line .caret {
  width: 8px;
  height: 8px;
  margin: 0 3px 0 2px;
}

.cmd-line input {
  flex: 1;
  color: #000;
}

.suggest {
  position: absolute;
  left: -1px;
  bottom: 22px;
  width: 319px;
  border: 1px solid var(--dark);
  background: var(--panel);
  color: #f0f0f0;
}

.suggest button {
  display: flex;
  align-items: center;
  width: 100%;
  height: 24px;
  padding: 0 4px 0 2px;
}

.suggest i,
.suggest button > .ic {
  width: 16px;
  margin-right: 4px;
}

.suggest .sel {
  background: #272c37;
}

.suggest .cat {
  height: 20px;
  border-top: 1px solid var(--dark);
  background: #465064;
  color: #c6cad1;
  font-family: "Noto Sans", sans-serif;
  font-weight: 700;
}

.tips {
  display: flex;
  gap: 4px;
  margin-left: auto;
}

.tips .help {
  --mark: #333;
}

.back {
  margin-left: auto;
  border: 4px solid transparent;
  border-right-color: #dcdcdc;
  border-left: none;
}

.console .mark {
  left: -8px;
  bottom: -1px;
  width: 328px;
  height: 24px;
}

/* Status bar */
.status {
  display: flex;
  justify-content: space-between;
  height: 29px;
  flex: none;
  margin: 1px 4px 3px;
  background: var(--dark);
}

.layouts {
  display: flex;
  padding-left: 9px;
}

.layouts button {
  height: 17px;
  width: 62px;
  margin-right: -8px;
  background: #2e3643;
  clip-path: polygon(0 0, 100% 0, calc(100% - 10px) 100%, 10px 100%);
  color: #aeb1b6;
}

.layouts .on {
  width: 52px;
  background: var(--panel);
  color: #fff;
  font-weight: 700;
}

.layouts .add {
  width: 26px;
  margin-left: 8px;
  border-radius: 0 0 8px 8px;
  clip-path: none;
  font-size: 18px;
}

.switches {
  display: flex;
  align-items: center;
  gap: 1px;
  height: 26px;
  padding-right: 2px;
}

.switches button {
  display: flex;
  align-items: center;
  justify-content: center;
  width: 24px;
  height: 24px;
  border: 1px solid var(--dark);
  background: var(--panel);
}

.switches > .caret {
  width: 14px;
}

.switches .on {
  background: #5f8dc0;
  color: #fff;
}

.switches .ratio {
  gap: 4px;
  width: 36px;
}

/* Callouts */
.note {
  position: absolute;
  z-index: 6;
  color: var(--red);
  font-size: 19px;
  line-height: 24px;
  white-space: nowrap;
}

.note svg {
  position: absolute;
  fill: var(--red);
  stroke: none;
}

.note-menu {
  left: 769px;
  top: 489px;
}

.note-menu svg {
  left: -3px;
  top: 41px;
}

.note-tool {
  right: 76px;
  top: 425px;
}

.note-tool svg {
  left: 77px;
  top: 37px;
}

.note-cmd {
  left: 223px;
  top: 598px;
}

.note-cmd svg {
  left: 18px;
  top: 49px;
}

.watermark {
  position: absolute;
  right: 16px;
  bottom: 6px;
  color: rgba(255, 255, 255, 0.65);
  font-family: "Liberation Sans", "Noto Sans CJK SC", sans-serif;
  font-size: 18px;
  line-height: 28px;
  text-shadow: 1px 1px 1px rgba(0, 0, 0, 0.5);
}
```
